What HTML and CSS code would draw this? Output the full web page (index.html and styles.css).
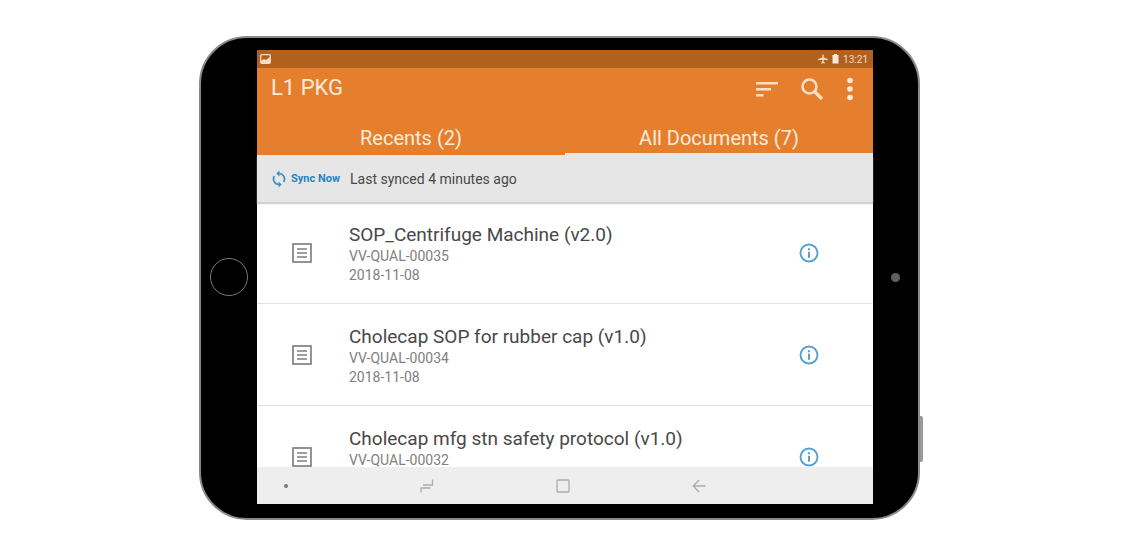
FILE: index.html
```
<!DOCTYPE html>
<html lang="en">
<head>
    <meta charset="UTF-8">
    <meta name="viewport" content="width=device-width, initial-scale=1.0">
    <title>L1 PKG</title>
    <link rel="stylesheet" href="styles.css">
</head>
<body>
    <div class="tablet">
        <div class="bezel"><button class="home" aria-label="Home"></button></div>
        <div class="screen">
            <div class="status">
                <svg width="11" height="10" viewBox="0 0 11 10"><rect x=".7" y=".7" width="9.6" height="8.6" rx="1" fill="none" stroke="#f8dcc2" stroke-width="1.3"/><path d="M1 9V7l3-2 2 1 4-3v6z" fill="#f8dcc2"/></svg>
                <div class="status-right">
                    <svg width="10" height="10" viewBox="0 0 10 10" fill="#f8dcc2"><path d="M4.3 1q.7-1.2 1.4 0v2.6L9.7 5v1.2l-4-.5v2l1.2 1v.8L5 9.3l-1.900.2V8.700l1.200-1v-2l-4 .5V5l4-1.400z"/></svg>
                    <svg width="7" height="10" viewBox="0 0 7 10" fill="#fbeadb"><path d="M2 0h3v1h1.5v8.6h-6V1H2z"/></svg>
                    <span>13:21</span>
                </div>
            </div>
            <header class="toolbar">
                <h1>L1 PKG</h1>
                <div class="actions">
                    <button aria-label="Sort">
                        <svg width="22" height="16" viewBox="0 0 22 16" fill="#fbe0c8"><path d="M0 1h22v2.4H0zM0 7h15v2.4H0zM0 13h7.5v2.4H0z"/></svg>
                    </button>
                    <button aria-label="Search">
                        <svg width="24" height="24" viewBox="0 0 24 24" fill="none" stroke="#fbe0c8"><circle cx="9.5" cy="9.5" r="7" stroke-width="2.6"/><path d="M14.5 14.5l7.5 7.5" stroke-width="3.4"/></svg>
                    </button>
                    <button aria-label="More">
                        <svg width="8" height="24" viewBox="0 0 8 24" fill="#fdebdc"><circle cx="4" cy="3.5" r="2.8"/><circle cx="4" cy="12" r="2.8"/><circle cx="4" cy="20.5" r="2.8"/></svg>
                    </button>
                </div>
            </header>
            <nav class="tabs">
                <button>Recents (2)</button>
                <button class="active">All Documents (7)</button>
            </nav>
            <div class="sync">
                <button>
                    <svg width="14" height="18" viewBox="0 0 14 18" fill="none" stroke="#3b8fc9" stroke-width="1.7"><path d="M7 3.500a5.500 5.500 0 0 1 4.600 8.500M7 14.500A5.500 5.500 0 0 1 2.400 6"/><path d="M7.500 .5v6L4.300 3.500zM6.500 11.500v6l3.200-3z" fill="#3b8fc9" stroke="none"/></svg>
                    Sync Now
                </button>
                <span>Last synced 4 minutes ago</span>
            </div>
            <ul class="docs">
                <li>
                    <svg class="doc-icon" width="20" height="20" viewBox="0 0 20 20" fill="none" stroke="#808080"><rect x="1" y="1" width="18" height="18" stroke-width="1.7"/><path d="M5 6h10M5 10h10M5 14h10" stroke-width="1.6"/></svg>
                    <div class="doc-text">
                        <h2>SOP_Centrifuge Machine (v2.0)</h2>
                        <p>VV-QUAL-00035</p>
                        <p>2018-11-08</p>
                    </div>
                    <button aria-label="Info">
                        <svg width="20" height="20" viewBox="0 0 20 20" fill="none" stroke="#57a0d0"><circle cx="10" cy="10" r="8.5" stroke-width="1.9"/><path d="M10 5.200v2M10 8.800v6" stroke-width="2"/></svg>
                    </button>
                </li>
                <li>
                    <svg class="doc-icon" width="20" height="20" viewBox="0 0 20 20" fill="none" stroke="#808080"><rect x="1" y="1" width="18" height="18" stroke-width="1.7"/><path d="M5 6h10M5 10h10M5 14h10" stroke-width="1.6"/></svg>
                    <div class="doc-text">
                        <h2>Cholecap SOP for rubber cap (v1.0)</h2>
                        <p>VV-QUAL-00034</p>
                        <p>2018-11-08</p>
                    </div>
                    <button aria-label="Info">
                        <svg width="20" height="20" viewBox="0 0 20 20" fill="none" stroke="#57a0d0"><circle cx="10" cy="10" r="8.5" stroke-width="1.9"/><path d="M10 5.200v2M10 8.800v6" stroke-width="2"/></svg>
                    </button>
                </li>
                <li>
                    <svg class="doc-icon" width="20" height="20" viewBox="0 0 20 20" fill="none" stroke="#808080"><rect x="1" y="1" width="18" height="18" stroke-width="1.7"/><path d="M5 6h10M5 10h10M5 14h10" stroke-width="1.6"/></svg>
                    <div class="doc-text">
                        <h2>Cholecap mfg stn safety protocol (v1.0)</h2>
                        <p>VV-QUAL-00032</p>
                    </div>
                    <button aria-label="Info">
                        <svg width="20" height="20" viewBox="0 0 20 20" fill="none" stroke="#57a0d0"><circle cx="10" cy="10" r="8.5" stroke-width="1.9"/><path d="M10 5.200v2M10 8.800v6" stroke-width="2"/></svg>
                    </button>
                </li>
            </ul>
            <nav class="navbar">
                <span class="dot"></span>
                <button aria-label="Recent apps">
                    <svg width="14" height="14" viewBox="0 0 14 14" fill="none" stroke="#adadad" stroke-width="1.3"><path d="M1 13.500V9h9.500M3 6h9.500V.5"/></svg>
                </button>
                <button aria-label="Home screen">
                    <svg width="14" height="14" viewBox="0 0 14 14" fill="none" stroke="#adadad" stroke-width="1.3"><rect x="1" y="1" width="12" height="12" rx="1"/></svg>
                </button>
                <button aria-label="Back">
                    <svg width="14" height="14" viewBox="0 0 14 14" fill="none" stroke="#adadad" stroke-width="1.4"><path d="M13.500 7H1.500M7 1L1.300 7 7 13"/></svg>
                </button>
            </nav>
        </div>
        <div class="bezel"><span class="camera"></span></div>
        <span class="side-button"></span>
    </div>
</body>
</html>
```
FILE: styles.css
```
* {
    box-sizing: border-box;
}
body {
    margin: 0;
    padding: 36px 205px 35px 199px;
    background-color: #fff;
    font-family: Roboto, Arial, sans-serif;
}
h1, h2, p, ul {
    margin: 0;
    padding: 0;
    font-weight: 400;
}
button {
    display: flex;
    align-items: center;
    justify-content: center;
    padding: 0;
    border: none;
    background: none;
    font-family: inherit;
    cursor: pointer;
}
svg {
    display: block;
    flex-shrink: 0;
}
.tablet {
    position: relative;
    display: grid;
    grid-template-columns: 56px 1fr 45px;
    padding: 12px 0 14px;
    background-color: #000;
    border: 2px solid #8a8888;
    border-radius: 48px;
}
.bezel {
    display: flex;
    align-items: center;
    justify-content: center;
}
.home {
    width: 38px;
    height: 38px;
    border: 1px solid #777;
    border-radius: 50%;
}
.camera {
    width: 9px;
    height: 9px;
    border-radius: 50%;
    background-color: #606060;
}
.side-button {
    position: absolute;
    right: -5px;
    bottom: 56px;
    width: 3px;
    height: 46px;
    border-radius: 0 2px 2px 0;
    background-color: #999;
}
.screen {
    min-width: 0;
    background-color: #fff;
}
.status {
    display: flex;
    align-items: center;
    justify-content: space-between;
    height: 18px;
    padding: 0 5px 0 3px;
    background-color: #b0611e;
    color: #f8dcc2;
    font-size: 10px;
}
.status-right {
    display: flex;
    align-items: center;
    gap: 4px;
}
.toolbar {
    display: flex;
    align-items: center;
    justify-content: space-between;
    height: 40px;
    padding: 0 19px 0 14px;
    background-color: #e57f2e;
}
.toolbar h1 {
    padding-bottom: 2px;
    color: #fdebdc;
    font-size: 22px;
}
.actions {
    display: flex;
    gap: 22px;
    padding-top: 2px;
}
.tabs {
    display: grid;
    grid-template-columns: 1fr 1fr;
    background-color: #e57f2e;
}
.tabs button {
    height: 47px;
    padding-top: 14px;
    border-bottom: 2px solid transparent;
    color: #fdebdc;
    font-size: 20px;
}
.tabs .active {
    border-bottom-color: #e9e7e5;
}
.sync {
    position: relative;
    display: flex;
    align-items: center;
    gap: 10px;
    height: 47px;
    padding-left: 15px;
    background-color: #e6e6e6;
    box-shadow: 0 2px 1px #d2d2d2;
    color: #484848;
    font-size: 14px;
}
.sync button {
    gap: 5px;
    color: #2583c4;
    font-size: 11px;
    font-weight: 700;
}
.docs {
    height: 265px;
    overflow: hidden;
    list-style: none;
}
.docs li {
    display: grid;
    grid-template-columns: 90px 1fr 128px;
    column-gap: 2px;
    align-items: center;
    height: 102px;
    border-bottom: 1px solid #e2e2e2;
}
.doc-icon {
    justify-self: center;
}
.docs button {
    justify-self: center;
}
.doc-text {
    height: 60px;
    color: #808080;
    font-size: 14px;
    line-height: 19px;
}
.doc-text h2 {
    color: #484848;
    font-size: 19px;
    line-height: 24px;
}
.navbar {
    display: grid;
    grid-template-columns: 102px repeat(3, 136px);
    align-items: center;
    justify-items: center;
    height: 37px;
    background-color: #eee;
}
.dot {
    justify-self: start;
    width: 4px;
    height: 4px;
    margin-left: 27px;
    border-radius: 50%;
    background-color: #777;
}
```
